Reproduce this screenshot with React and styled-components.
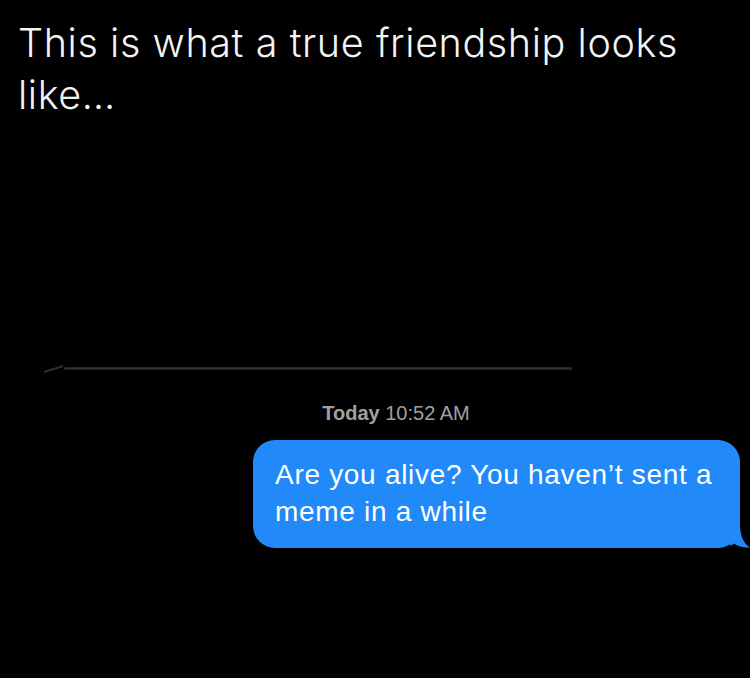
import React from "react";
import styled, { createGlobalStyle } from "styled-components";

const Global = createGlobalStyle`
  html, body { margin: 0; padding: 0; background: #000; }
  #root { width: 750px; height: 678px; overflow: hidden; }
`;

const Page = styled.div`
  width: 750px;
  height: 678px;
  background: #000;
  display: flex;
  flex-direction: column;
  font-family: "Liberation Sans", Arial, sans-serif;
`;

const Caption = styled.h1`
  margin: 0;
  padding: 17px 30px 0 18px;
  color: #f4f4f4;
  font-family: "Inter", "Liberation Sans", sans-serif;
  font-weight: 300;
  font-size: 39.5px;
  line-height: 52px;
  letter-spacing: 0.6px;
`;

const Divider = styled.div`
  margin: 244px 0 0 42px;
  width: 530px;
  height: 6px;
  position: relative;
  display: flex;
  align-items: center;
`;

const Rule = styled.div`
  margin-left: 22px;
  flex: 1;
  height: 3px;
  background: linear-gradient(#1f1f26, #2e2e38, #1c1c22);
  border-radius: 2px;
`;

const Edge = styled.svg`
  position: absolute;
  left: 0;
  top: -3px;
`;

const Stamp = styled.div`
  margin-top: 30px;
  text-align: center;
  padding-left: 42px;
  color: #a0a0a4;
  font-size: 20px;
  line-height: 24px;
  b { font-weight: 600; }
`;

const Row = styled.div`
  margin-top: 15px;
  display: flex;
  justify-content: flex-end;
  padding-right: 10px;
`;

const Bubble = styled.div`
  position: relative;
  width: 445px;
  background: #2189f8;
  color: #fff;
  border-radius: 22px;
  padding: 16px 20px 18px 22px;
  font-size: 28px;
  line-height: 37px;
  letter-spacing: 0.7px;
`;

const Tail = styled.svg`
  position: absolute;
  right: -10px;
  bottom: 0;
`;

export default function App() {
  return (
    <>
      <Global />
      <Page>
        <Caption>This is what a true friendship looks like…</Caption>
        <Divider>
          <Edge width="26" height="12" viewBox="0 0 26 12">
            <path d="M2 10 L18 5 L21 4" stroke="#2e2e34" strokeWidth="2" fill="none" />
          </Edge>
          <Rule />
        </Divider>
        <Stamp>
          <b>Today</b> 10:52 AM
        </Stamp>
        <Row>
          <Bubble>
            Are you alive? You haven’t sent a meme in a while
            <Tail width="20" height="24" viewBox="0 0 20 24">
              <path d="M0 0 L10 0 C10 11 13 19 20 23.5 C14 24 8 22.5 4 19.5 C3 20.5 1.5 21.2 0 21.5 Z" fill="#2189f8" />
            </Tail>
          </Bubble>
        </Row>
      </Page>
    </>
  );
}
